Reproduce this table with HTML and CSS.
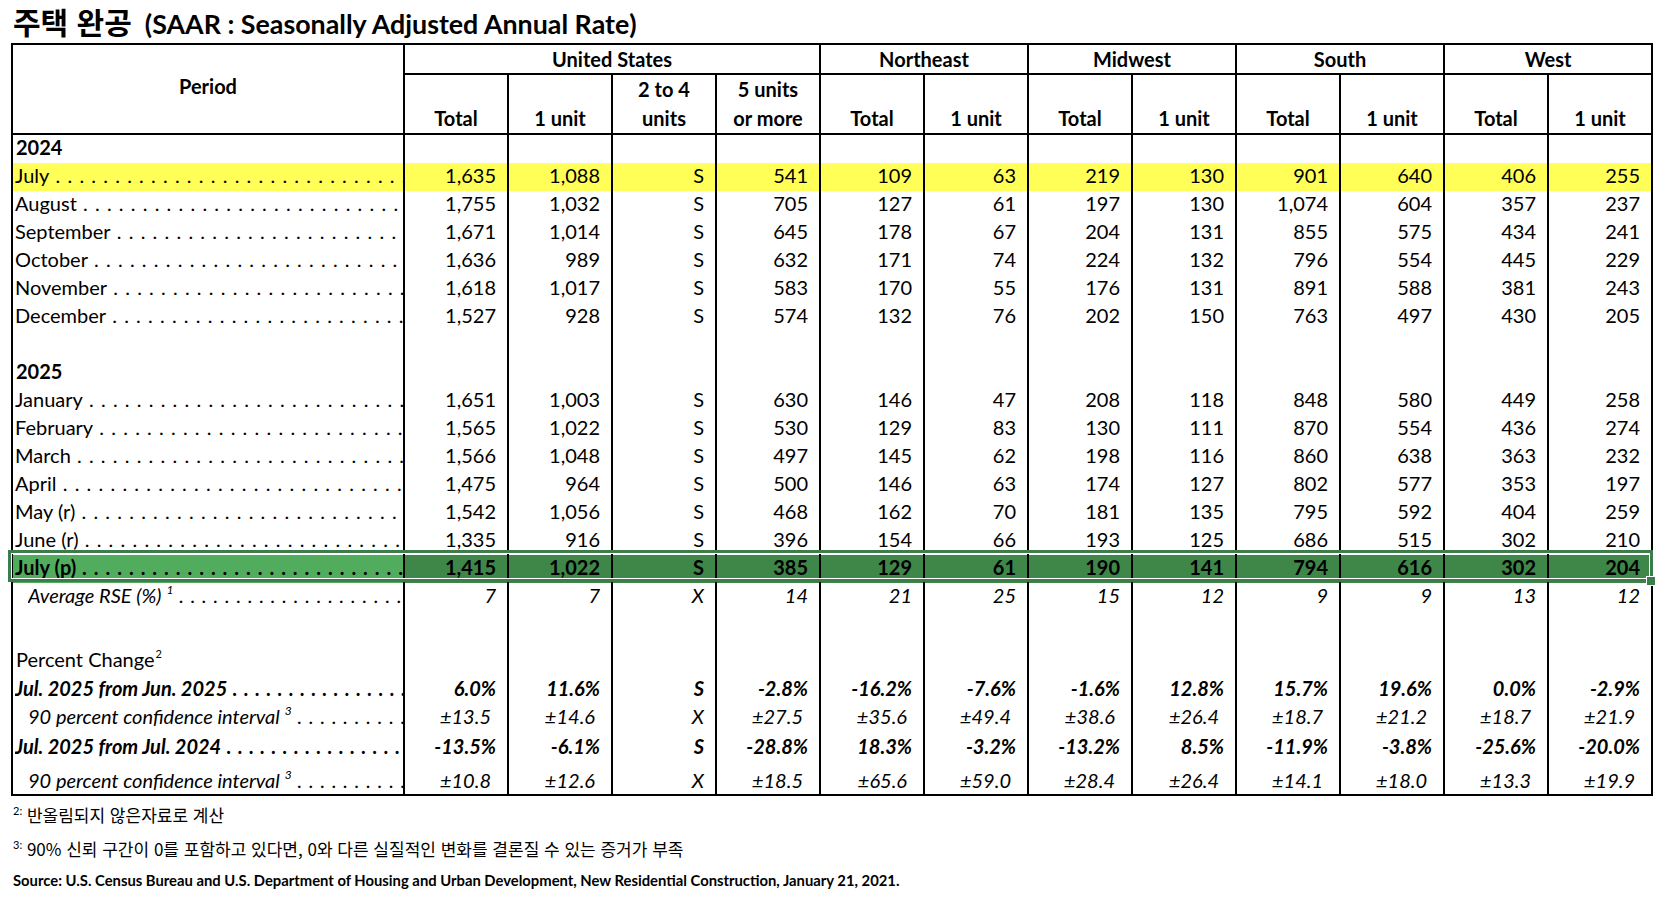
FILE: index.html
```html
<!DOCTYPE html>
<html lang="ko">
<head>
<meta charset="utf-8">
<title>주택 완공</title>
<link rel="stylesheet" href="styles.css">
</head>
<body>
<div class="title"><span class="ko">주택 완공</span><span class="en">(SAAR : Seasonally Adjusted Annual Rate)</span></div>
<div class="wrap">
<table class="tbl">
<colgroup><col class="cp"><col class="cd"><col class="cd"><col class="cd"><col class="cd"><col class="cd"><col class="cd"><col class="cd"><col class="cd"><col class="cd"><col class="cd"><col class="cd"><col class="cd"></colgroup>
<thead>
<tr class="h1"><th rowspan="2" class="period">Period</th><th colspan="4">United States</th><th colspan="2">Northeast</th><th colspan="2">Midwest</th><th colspan="2">South</th><th colspan="2">West</th></tr>
<tr class="h2"><th>Total</th><th>1 unit</th><th>2 to 4<br>units</th><th>5 units<br>or more</th><th>Total</th><th>1 unit</th><th>Total</th><th>1 unit</th><th>Total</th><th>1 unit</th><th>Total</th><th>1 unit</th></tr>
</thead>
<tbody>
<tr class="r"><td class="per yr">2024</td><td></td><td></td><td></td><td></td><td></td><td></td><td></td><td></td><td></td><td></td><td></td><td></td></tr>
<tr class="r yel"><td class="per"><div class="lab"><span>July</span><span class="d"></span></div></td><td>1,635</td><td>1,088</td><td>S</td><td>541</td><td>109</td><td>63</td><td>219</td><td>130</td><td>901</td><td>640</td><td>406</td><td>255</td></tr>
<tr class="r"><td class="per"><div class="lab"><span>August</span><span class="d"></span></div></td><td>1,755</td><td>1,032</td><td>S</td><td>705</td><td>127</td><td>61</td><td>197</td><td>130</td><td>1,074</td><td>604</td><td>357</td><td>237</td></tr>
<tr class="r"><td class="per"><div class="lab"><span>September</span><span class="d"></span></div></td><td>1,671</td><td>1,014</td><td>S</td><td>645</td><td>178</td><td>67</td><td>204</td><td>131</td><td>855</td><td>575</td><td>434</td><td>241</td></tr>
<tr class="r"><td class="per"><div class="lab"><span>October</span><span class="d"></span></div></td><td>1,636</td><td>989</td><td>S</td><td>632</td><td>171</td><td>74</td><td>224</td><td>132</td><td>796</td><td>554</td><td>445</td><td>229</td></tr>
<tr class="r"><td class="per"><div class="lab"><span>November</span><span class="d"></span></div></td><td>1,618</td><td>1,017</td><td>S</td><td>583</td><td>170</td><td>55</td><td>176</td><td>131</td><td>891</td><td>588</td><td>381</td><td>243</td></tr>
<tr class="r"><td class="per"><div class="lab"><span>December</span><span class="d"></span></div></td><td>1,527</td><td>928</td><td>S</td><td>574</td><td>132</td><td>76</td><td>202</td><td>150</td><td>763</td><td>497</td><td>430</td><td>205</td></tr>
<tr class="r"><td class="per"></td><td></td><td></td><td></td><td></td><td></td><td></td><td></td><td></td><td></td><td></td><td></td><td></td></tr>
<tr class="r"><td class="per yr">2025</td><td></td><td></td><td></td><td></td><td></td><td></td><td></td><td></td><td></td><td></td><td></td><td></td></tr>
<tr class="r"><td class="per"><div class="lab"><span>January</span><span class="d"></span></div></td><td>1,651</td><td>1,003</td><td>S</td><td>630</td><td>146</td><td>47</td><td>208</td><td>118</td><td>848</td><td>580</td><td>449</td><td>258</td></tr>
<tr class="r"><td class="per"><div class="lab"><span>February</span><span class="d"></span></div></td><td>1,565</td><td>1,022</td><td>S</td><td>530</td><td>129</td><td>83</td><td>130</td><td>111</td><td>870</td><td>554</td><td>436</td><td>274</td></tr>
<tr class="r"><td class="per"><div class="lab"><span>March</span><span class="d"></span></div></td><td>1,566</td><td>1,048</td><td>S</td><td>497</td><td>145</td><td>62</td><td>198</td><td>116</td><td>860</td><td>638</td><td>363</td><td>232</td></tr>
<tr class="r"><td class="per"><div class="lab"><span>April</span><span class="d"></span></div></td><td>1,475</td><td>964</td><td>S</td><td>500</td><td>146</td><td>63</td><td>174</td><td>127</td><td>802</td><td>577</td><td>353</td><td>197</td></tr>
<tr class="r"><td class="per"><div class="lab"><span>May (r)</span><span class="d"></span></div></td><td>1,542</td><td>1,056</td><td>S</td><td>468</td><td>162</td><td>70</td><td>181</td><td>135</td><td>795</td><td>592</td><td>404</td><td>259</td></tr>
<tr class="r"><td class="per"><div class="lab"><span>June (r)</span><span class="d"></span></div></td><td>1,335</td><td>916</td><td>S</td><td>396</td><td>154</td><td>66</td><td>193</td><td>125</td><td>686</td><td>515</td><td>302</td><td>210</td></tr>
<tr class="r grn"><td class="per"><div class="lab"><span>July (p)</span><span class="d"></span></div></td><td>1,415</td><td>1,022</td><td>S</td><td>385</td><td>129</td><td>61</td><td>190</td><td>141</td><td>794</td><td>616</td><td>302</td><td>204</td></tr>
<tr class="r it rse"><td class="per ind2"><div class="lab"><span>Average RSE (%)<sup>1</sup></span><span class="d"></span></div></td><td>7</td><td>7</td><td>X</td><td>14</td><td>21</td><td>25</td><td>15</td><td>12</td><td>9</td><td>9</td><td>13</td><td>12</td></tr>
<tr class="gap"><td class="per"></td><td></td><td></td><td></td><td></td><td></td><td></td><td></td><td></td><td></td><td></td><td></td><td></td></tr>
<tr class="r"><td class="per ind1">Percent Change<sup class="sm">2</sup></td><td></td><td></td><td></td><td></td><td></td><td></td><td></td><td></td><td></td><td></td><td></td><td></td></tr>
<tr class="r bi rA"><td class="per"><div class="lab"><span>Jul. 2025 from Jun. 2025</span><span class="d"></span></div></td><td>6.0%</td><td>11.6%</td><td>S</td><td>-2.8%</td><td>-16.2%</td><td>-7.6%</td><td>-1.6%</td><td>12.8%</td><td>15.7%</td><td>19.6%</td><td>0.0%</td><td>-2.9%</td></tr>
<tr class="r it ci"><td class="per ind2"><div class="lab"><span>90 percent confidence interval<sup>3</sup></span><span class="d"></span></div></td><td>±13.5</td><td>±14.6</td><td class="x">X</td><td>±27.5</td><td>±35.6</td><td>±49.4</td><td>±38.6</td><td>±26.4</td><td>±18.7</td><td>±21.2</td><td>±18.7</td><td>±21.9</td></tr>
<tr class="r bi rB"><td class="per"><div class="lab"><span>Jul. 2025 from Jul. 2024</span><span class="d"></span></div></td><td>-13.5%</td><td>-6.1%</td><td>S</td><td>-28.8%</td><td>18.3%</td><td>-3.2%</td><td>-13.2%</td><td>8.5%</td><td>-11.9%</td><td>-3.8%</td><td>-25.6%</td><td>-20.0%</td></tr>
<tr class="r it ci last"><td class="per ind2"><div class="lab"><span>90 percent confidence interval<sup>3</sup></span><span class="d"></span></div></td><td>±10.8</td><td>±12.6</td><td class="x">X</td><td>±18.5</td><td>±65.6</td><td>±59.0</td><td>±28.4</td><td>±26.4</td><td>±14.1</td><td>±18.0</td><td>±13.3</td><td>±19.9</td></tr>
</tbody>
</table>
<div class="sel"></div>
<div class="handle"></div>
</div>
<div class="notes">
<p class="fn"><sup>2:</sup> 반올림되지 않은자료로 계산</p>
<p class="fn"><sup>3:</sup> 90% 신뢰 구간이 0를 포함하고 있다면, 0와 다른 실질적인 변화를 결론질 수 있는 증거가 부족</p>
<p class="src">Source: U.S. Census Bureau and U.S. Department of Housing and Urban Development, New Residential Construction, January 21, 2021.</p>
</div>
</body>
</html>
```
FILE: styles.css
```css
* { box-sizing: border-box; }
body {
  margin: 0;
  background: #fff;
  color: #000;
  font-family: Lato, "Noto Sans CJK KR", sans-serif;
}
.title {
  height: 43px;
  line-height: 42px;
  padding-left: 13px;
  font-weight: 700;
  white-space: nowrap;
}
.title .ko {
  font-family: "Noto Sans CJK KR", sans-serif;
  font-size: 30px;
  margin-right: 13px;
}
.title .en {
  font-size: 26.8px;
}
.wrap { position: relative; }
.tbl {
  margin-left: 11px;
  border-collapse: collapse;
  table-layout: fixed;
  width: 1640px;
  font-size: 20px;
}
.cp { width: 392px; }
.cd { width: 104px; }
.tbl th, .tbl td {
  border-left: 2px solid #000;
  border-right: 2px solid #000;
  padding: 0;
}
.tbl th { font-weight: 700; text-align: center; }
.h1 th {
  height: 30px;
  border-top: 2px solid #000;
  border-bottom: 2px solid #000;
  line-height: 26px;
}
.h1 th.period {
  vertical-align: middle;
  border-bottom: 2px solid #000;
  padding-bottom: 6px;
}
.h2 th {
  height: 59px;
  vertical-align: bottom;
  line-height: 29px;
  border-bottom: 2px solid #000;
  padding-bottom: 0;
}
.r { height: 28px; }
.r td {
  line-height: 24px;
  vertical-align: middle;
  text-align: right;
  padding-right: 11px;
  padding-bottom: 4px;
  white-space: nowrap;
}
.tbl td.per {
  text-align: left;
  padding-left: 2px;
  padding-right: 0;
}
.tbl td.yr { font-weight: 700; padding-left: 3px; }
.tbl td.ind1 { padding-left: 3px; }
.tbl td.ind2 { padding-left: 15px; }
.lab {
  display: flex;
  white-space: nowrap;
  overflow: hidden;
}
.lab .d {
  flex: 1 1 0;
  min-width: 0;
  overflow: hidden;
  white-space: pre;
  letter-spacing: 1.05px;
}
.lab .d::after {
  content: " . . . . . . . . . . . . . . . . . . . . . . . . . . . . . . . . . . . . . . . . . . . . . . . . . . . . . . . . . . . . . . . . . . .";
}
.tbl sup {
  font-size: 12px;
  line-height: 0;
  vertical-align: 9px;
  margin-left: 5px;
}
.tbl sup.sm { margin-left: 1px; font-size: 11px; }
.yel td { background: #ffff57; }
.grn td { background: #3f8649; font-weight: 700; }
.grn td.per { background: #51ad5d; }
.it td { font-style: italic; }
.bi td { font-style: italic; font-weight: 700; }
.gap { height: 36px; }
.rA { height: 29px; }
.rB { height: 31px; }
.last { height: 32px; }
.last td {
  border-bottom: 2px solid #000;
  padding-bottom: 0;
  padding-top: 3px;
}
.ci td { padding-right: 16px; }
.ci td.x { padding-right: 11px; }
.sel {
  position: absolute;
  left: 8px;
  top: 507px;
  width: 1645px;
  height: 32px;
  border: 3px solid #3c7d4c;
  box-shadow: inset 0 0 0 1px #fff;
  pointer-events: none;
}
.handle {
  position: absolute;
  left: 1646px;
  top: 533px;
  width: 10px;
  height: 10px;
  background: #3c7d4c;
  border: 1px solid #fff;
}
.notes { padding-left: 13px; }
.fn {
  margin: 0;
  font-family: "Noto Sans CJK KR", sans-serif;
  font-size: 17px;
  line-height: 34px;
}
.fn:first-child { margin-top: 2px; }
.fn sup {
  font-family: Lato, sans-serif;
  font-size: 11px;
  line-height: 0;
  vertical-align: 7px;
}
.src {
  margin: 0;
  font-weight: 700;
  font-size: 14.8px;
  line-height: 28px;
}
```
